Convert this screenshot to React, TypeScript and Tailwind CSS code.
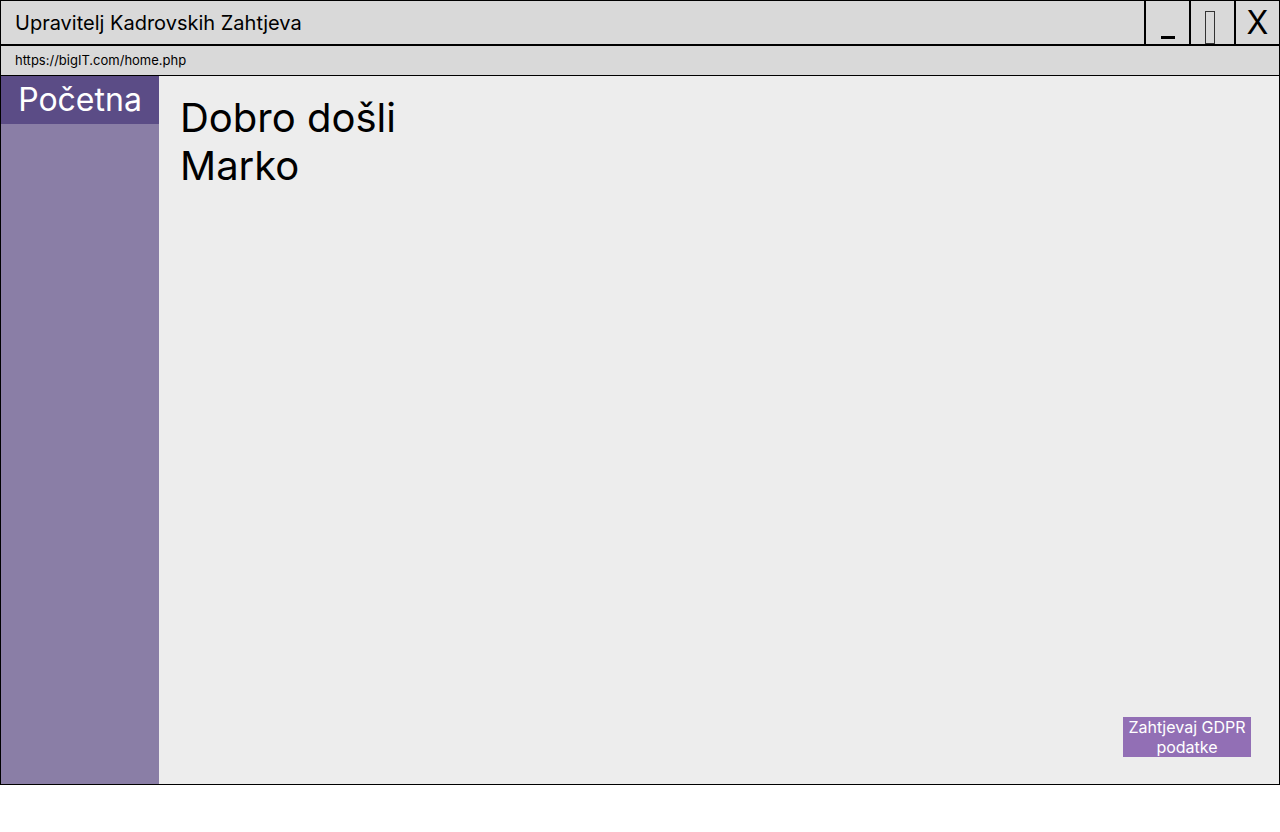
import React from "react";

export default function App() {
  return (
    <div className="w-[1280px] h-[832px] bg-white" style={{ fontFamily: "Inter, 'Noto Sans', sans-serif" }}>
      <div className="w-[1280px] h-[785px] border border-black flex flex-col">
        <div className="h-[45px] border-b-2 border-black bg-[#d9d9d9] flex items-stretch shrink-0">
          <div className="flex-1 flex items-center pl-[14px] text-[20px] text-black">Upravitelj Kadrovskih Zahtjeva</div>
          <div className="w-[45px] border-l-2 border-black flex items-end justify-center pb-[4px]">
            <div className="w-[14px] h-[3px] bg-black mb-[1px]" />
          </div>
          <div className="w-[45px] border-l-2 border-black flex items-start justify-center">
            <div className="w-[10px] h-[33px] border border-[#333] mt-[10px] mr-[5px]" />
          </div>
          <div className="w-[45px] border-l-2 border-black flex items-center justify-center text-[32px] leading-none text-black">X</div>
        </div>
        <div className="h-[30px] border-b border-black bg-[#d9d9d9] flex items-center pl-[14px] text-[13px] text-black shrink-0">https://bigIT.com/home.php</div>
        <div className="flex-1 flex min-h-0">
          <div className="w-[158px] bg-[#8a7ea6] flex flex-col">
            <div className="h-[48px] bg-[#5b4c86] flex items-center justify-center text-[32px] text-white">Početna</div>
          </div>
          <div className="flex-1 bg-[#ededed] relative">
            <div className="pl-[21px] pt-[18px] text-[40px] leading-[48px] text-black">
              Dobro došli
              <br />
              Marko
            </div>
            <div className="absolute right-[28px] bottom-[27px] w-[128px] h-[40px] bg-[#926fb5] text-white text-[16px] leading-[20px] text-center flex items-center justify-center">
              Zahtjevaj GDPR
              <br />
              podatke
            </div>
          </div>
        </div>
      </div>
    </div>
  );
}
